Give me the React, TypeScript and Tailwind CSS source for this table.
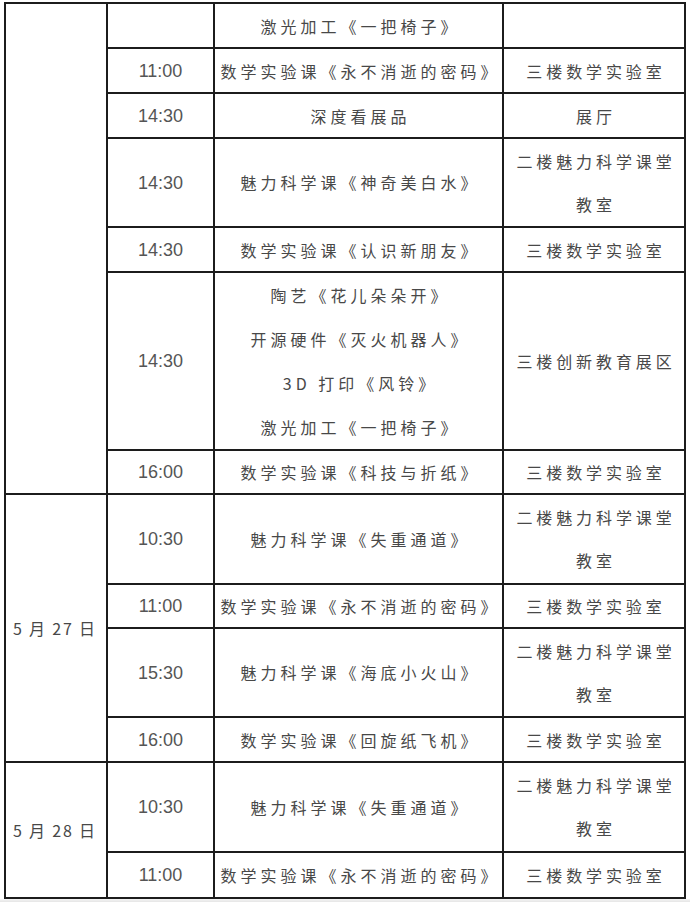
import React from 'react';

type Row = {
  date?: { label: string; span: number };
  time: string;
  activity: string[];
  place: string;
  h: string;
  lead: string;
};

const ROOM = '二楼魅力科学课堂教室';
const MATH = '三楼数学实验室';

const S = 'leading-[40px]';
const D = 'leading-[43px]';

const rows: Row[] = [
  { date: { label: '', span: 7 }, time: '', activity: ['激光加工《一把椅子》'], place: '', h: 'h-[45px]', lead: S },
  { time: '11:00', activity: ['数学实验课《永不消逝的密码》'], place: MATH, h: 'h-[45px]', lead: S },
  { time: '14:30', activity: ['深度看展品'], place: '展厅', h: 'h-[45px]', lead: S },
  { time: '14:30', activity: ['魅力科学课《神奇美白水》'], place: ROOM, h: 'h-[89px]', lead: D },
  { time: '14:30', activity: ['数学实验课《认识新朋友》'], place: MATH, h: 'h-[45px]', lead: S },
  {
    time: '14:30',
    activity: ['陶艺《花儿朵朵开》', '开源硬件《灭火机器人》', '3D 打印《风铃》', '激光加工《一把椅子》'],
    place: '三楼创新教育展区',
    h: 'h-[178px]',
    lead: 'leading-[44px]',
  },
  { time: '16:00', activity: ['数学实验课《科技与折纸》'], place: MATH, h: 'h-[44px]', lead: S },
  { date: { label: '5 月 27 日', span: 4 }, time: '10:30', activity: ['魅力科学课《失重通道》'], place: ROOM, h: 'h-[90px]', lead: D },
  { time: '11:00', activity: ['数学实验课《永不消逝的密码》'], place: MATH, h: 'h-[44px]', lead: S },
  { time: '15:30', activity: ['魅力科学课《海底小火山》'], place: ROOM, h: 'h-[89px]', lead: D },
  { time: '16:00', activity: ['数学实验课《回旋纸飞机》'], place: MATH, h: 'h-[45px]', lead: S },
  { date: { label: '5 月 28 日', span: 2 }, time: '10:30', activity: ['魅力科学课《失重通道》'], place: ROOM, h: 'h-[90px]', lead: D },
  { time: '11:00', activity: ['数学实验课《永不消逝的密码》'], place: MATH, h: 'h-[46px]', lead: S },
];

const cell = 'border-2 border-[#1c1c1c] p-0 align-middle';
const cjk = "font-['Noto_Sans_CJK_SC','Noto_Sans',sans-serif] text-[16px] text-[#484848]";

export default function App() {
  return (
    <div className="w-[690px] h-[902px] bg-white overflow-hidden flex flex-col" lang="zh-CN">
      <div className="pt-[2px] pl-[4px]">
        <table className="border-collapse table-fixed w-[680px]">
          <colgroup>
            <col className="w-[102px]" />
            <col className="w-[107px]" />
            <col className="w-[289px]" />
            <col className="w-[182px]" />
          </colgroup>
          <tbody>
            {rows.map((r, i) => (
              <tr key={i} className={r.h}>
                {r.date && (
                  <td rowSpan={r.date.span} className={`${cell} pl-[7px] text-left whitespace-nowrap ${cjk} leading-[24px] tracking-[1.8px]`}>
                    {r.date.label}
                  </td>
                )}
                <td className={`${cell} text-center font-['Liberation_Sans',Arial,sans-serif] text-[18px] leading-[24px] text-[#555]`}>
                  {r.time}
                </td>
                <td className={`${cell} text-center ${cjk} tracking-[4px] pl-[4px]`}>
                  {r.activity.map((a, j) => (
                    <div key={j} className={`${r.lead} whitespace-nowrap`}>
                      {a}
                    </div>
                  ))}
                </td>
                <td className={`${cell} text-center ${cjk} tracking-[3.9px] pl-[12px] pr-[8px] ${r.lead}`}>
                  {r.place}
                </td>
              </tr>
            ))}
          </tbody>
        </table>
      </div>
      <div className="flex-1 bg-gradient-to-b from-[#f4f4f4] to-[#e6e6e6]" />
    </div>
  );
}
